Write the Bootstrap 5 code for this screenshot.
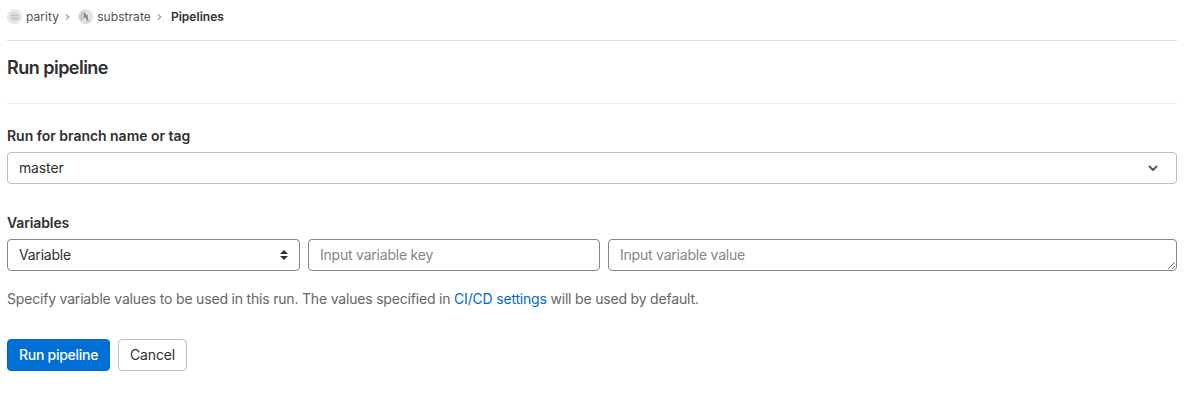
<!DOCTYPE html>
<html lang="en">
<head>
<meta charset="utf-8">
<meta name="viewport" content="width=device-width, initial-scale=1">
<title>Run pipeline</title>
<link href="https://cdn.jsdelivr.net/npm/bootstrap@5.3.0/dist/css/bootstrap.min.css" rel="stylesheet">
<style>
body{font-family:Inter,"Liberation Sans",sans-serif;font-size:14px;line-height:20px;color:#303030;background:#fff}
.page{padding:0 13px 0 7px}
.crumbs{height:41px;padding-bottom:7px;border-bottom:1px solid #dbdbdb;font-size:12px;line-height:16px;letter-spacing:.07px}
.crumbs a{color:#525252;text-decoration:none}
.crumbs strong{font-weight:600;color:#303030;letter-spacing:.03px}
.avatar{width:16px;height:16px;margin-right:3px}
.sep{width:5px;height:8px;margin:1px 8px 0 6px}
.sep-last{margin-right:9px}
.page-title{font-size:18px;line-height:24px;font-weight:600;height:63px;padding-top:15px;margin:0;border-bottom:1px solid #eee;letter-spacing:-.52px}
.group-ref{padding-top:22px}
.group-vars{padding-top:29px}
.form-label{font-weight:600;line-height:20px;height:20px;margin-bottom:6px;letter-spacing:-.03px;display:block}
.group-vars .form-label{letter-spacing:-.12px}
.field{height:32px;min-height:32px!important;padding:5px 11px;font-size:14px;line-height:20px;border:1px solid #868686;border-radius:4px;color:#303030;letter-spacing:-.22px;background-color:#fff}
.field::placeholder{color:#868686;opacity:1}
.branch{border-color:#bfbfbf;letter-spacing:-.14px}
.branch svg{width:10px;height:7px;margin-right:7px}
.kind{width:293px}
.key{width:292px;padding-top:4px;padding-bottom:6px}
.help{color:#666;letter-spacing:-.19px;margin-top:18px}
.help a{color:#0068d0;text-decoration:none}
.actions{padding-top:30px}
.action{height:32px;padding:5px 11px;font-size:14px;line-height:20px;border-radius:4px;letter-spacing:-.15px}
.run{background:#006fd6;border-color:#0064c8;color:#fff;font-weight:500;width:103px;white-space:nowrap;letter-spacing:-.27px}
.cancel{background:#fff;border-color:#bfbfbf;color:#303030;width:69px}
</style>
</head>
<body>
<main class="page">
  <nav class="crumbs d-flex align-items-center" aria-label="Breadcrumb">
    <svg class="avatar" viewBox="0 0 16 16"><circle cx="7.6" cy="7.7" r="7" fill="#f0f0f0" stroke="#dadada" stroke-width=".8"/><circle cx="7.6" cy="7.7" r="5.3" fill="#dcdcdc"/><path d="M3.5 6.3h8M4 9.5h7.5" stroke="#c2c2c2" stroke-width="1.3"/></svg>
    <a href="#">parity</a>
    <svg class="sep" viewBox="0 0 5 8"><path d="M1 1.3 3.7 4 1 6.7" fill="none" stroke="#999" stroke-width="1.2"/></svg>
    <svg class="avatar" viewBox="0 0 16 16"><circle cx="7.6" cy="7.7" r="7" fill="#e4e4e4" stroke="#d8d8d8" stroke-width=".8"/><path d="M7 1.5A6.3 6.3 0 0 0 3 12l4.5-3z" fill="#c9c9c9"/><path d="m8 9 5 1.5A6 6 0 0 1 8 14z" fill="#cfcfcf"/><path d="m6.8 4 .2 4 1.8-1.2.3 4.4" fill="none" stroke="#777" stroke-width="1.5"/></svg>
    <a href="#">substrate</a>
    <svg class="sep sep-last" viewBox="0 0 5 8"><path d="M1 1.3 3.7 4 1 6.7" fill="none" stroke="#999" stroke-width="1.2"/></svg>
    <strong>Pipelines</strong>
  </nav>
  <h1 class="page-title">Run pipeline</h1>
  <form>
    <div class="group-ref">
      <span class="form-label">Run for branch name or tag</span>
      <button type="button" class="field branch w-100 d-flex align-items-center justify-content-between"><span>master</span>
        <svg viewBox="0 0 10 7"><path d="m1.5 1.5 3.5 3.5 3.5-3.5" fill="none" stroke="#555" stroke-width="1.8" stroke-linecap="round" stroke-linejoin="round"/></svg></button>
    </div>
    <div class="group-vars">
      <span class="form-label">Variables</span>
      <div class="d-flex gap-2">
        <div class="field kind d-flex align-items-center justify-content-between" role="combobox" tabindex="0"><span>Variable</span>
          <svg width="8" height="10" viewBox="0 0 8 10"><path d="M4 0 8 4H0zM4 10 0 6h8z" fill="#303030"/></svg></div>
        <input class="field key" placeholder="Input variable key">
        <textarea class="field flex-grow-1" rows="1" placeholder="Input variable value"></textarea>
      </div>
      <div class="help"><span>Specify variable values to be used in this run. The values specified in <a href="#">CI/CD settings</a> will be used by default.</span></div>
    </div>
    <div class="actions d-flex gap-2">
      <button type="button" class="btn action run">Run pipeline</button>
      <button type="button" class="btn action cancel">Cancel</button>
    </div>
  </form>
</main>
<script src="https://cdn.jsdelivr.net/npm/bootstrap@5.3.0/dist/js/bootstrap.bundle.min.js"></script>
</body>
</html>
